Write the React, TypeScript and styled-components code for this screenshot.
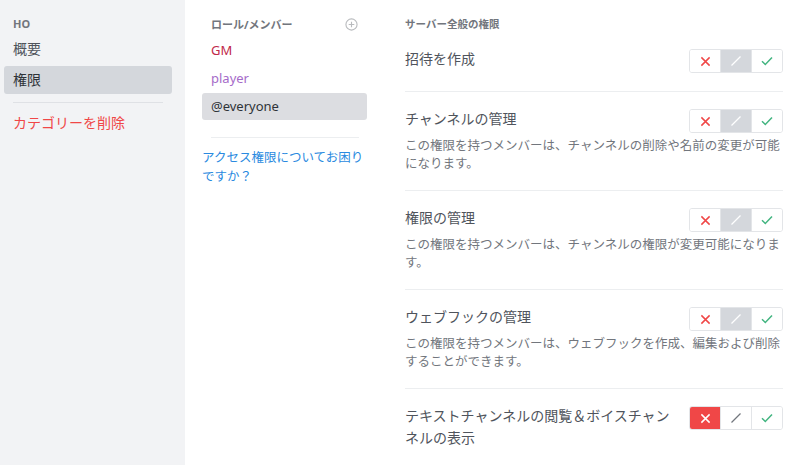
import styled, { createGlobalStyle } from "styled-components";

const GlobalStyle = createGlobalStyle`
  html, body {
    margin: 0;
    padding: 0;
    background: #ffffff;
  }
  body {
    font-family: "Noto Sans", "Noto Sans CJK JP", sans-serif;
  }
`;

type Perm = {
  title: string;
  desc?: string;
  state: "deny" | "neutral" | "allow";
};

const perms: Perm[] = [
  { title: "招待を作成", state: "neutral" },
  {
    title: "チャンネルの管理",
    desc: "この権限を持つメンバーは、チャンネルの削除や名前の変更が可能になります。",
    state: "neutral",
  },
  {
    title: "権限の管理",
    desc: "この権限を持つメンバーは、チャンネルの権限が変更可能になります。",
    state: "neutral",
  },
  {
    title: "ウェブフックの管理",
    desc: "この権限を持つメンバーは、ウェブフックを作成、編集および削除することができます。",
    state: "neutral",
  },
  { title: "テキストチャンネルの閲覧＆ボイスチャンネルの表示", state: "deny" },
];

const roles = [
  { name: "GM", color: "#c0284a" },
  { name: "player", color: "#a56bc9" },
  { name: "@everyone", color: "#2e3338", selected: true },
];

export default function App() {
  return (
    <Layout>
      <GlobalStyle />
      <Sidebar>
        <SideHeader>HO</SideHeader>
        <SideItem>概要</SideItem>
        <SideItem $selected>権限</SideItem>
        <SideDivider />
        <SideItem $danger>カテゴリーを削除</SideItem>
      </Sidebar>

      <Roles>
        <RolesHeader>
          <span>ロール/メンバー</span>
          <PlusIcon />
        </RolesHeader>
        <RoleList>
          {roles.map((r) => (
            <RoleItem key={r.name} $color={r.color} $selected={r.selected}>
              {r.name}
            </RoleItem>
          ))}
        </RoleList>
        <RoleDivider />
        <HelpLink>アクセス権限についてお困りですか？</HelpLink>
      </Roles>

      <Content>
        <SectionHeader>サーバー全般の権限</SectionHeader>
        {perms.map((p) => (
          <PermRow key={p.title} $hasDesc={!!p.desc}>
            <PermTop>
              <PermTitle>{p.title}</PermTitle>
              <Toggle state={p.state} />
            </PermTop>
            {p.desc && <PermDesc>{p.desc}</PermDesc>}
          </PermRow>
        ))}
      </Content>
    </Layout>
  );
}

function PlusIcon() {
  return (
    <svg width="13" height="13" viewBox="0 0 14 14">
      <circle cx="7" cy="7" r="6" fill="none" stroke="#b9bbbe" strokeWidth="1.2" />
      <path d="M7 4v6M4 7h6" stroke="#b9bbbe" strokeWidth="1.2" />
    </svg>
  );
}

function Toggle({ state }: { state: Perm["state"] }) {
  return (
    <ToggleGroup>
      <ToggleCell $bg={state === "deny" ? "#f04747" : "#ffffff"}>
        <svg width="11" height="11" viewBox="0 0 12 12">
          <path
            d="M1.5 1.5l9 9M10.5 1.5l-9 9"
            stroke={state === "deny" ? "#ffffff" : "#f04747"}
            strokeWidth="1.6"
          />
        </svg>
      </ToggleCell>
      <ToggleCell $bg={state === "neutral" ? "#d4d7dc" : "#ffffff"}>
        <svg width="12" height="12" viewBox="0 0 12 12">
          <path
            d="M1.5 10.5l9-9"
            stroke={state === "neutral" ? "#ffffff" : "#72767d"}
            strokeWidth="1.3"
          />
        </svg>
      </ToggleCell>
      <ToggleCell $bg={state === "allow" ? "#43b581" : "#ffffff"}>
        <svg width="12" height="10" viewBox="0 0 12 10">
          <path
            d="M1 5.2l3.3 3.3L11 1.5"
            fill="none"
            stroke={state === "allow" ? "#ffffff" : "#43b581"}
            strokeWidth="1.5"
          />
        </svg>
      </ToggleCell>
    </ToggleGroup>
  );
}

const Layout = styled.div`
  display: flex;
  width: 800px;
  height: 465px;
  overflow: hidden;
  background: #ffffff;
`;

const Sidebar = styled.nav`
  width: 185px;
  flex-shrink: 0;
  box-sizing: border-box;
  background: #f2f3f5;
  padding: 17px 13px 0 4px;
  display: flex;
  flex-direction: column;
`;

const SideHeader = styled.div`
  font-size: 11px;
  font-weight: 700;
  line-height: 14px;
  color: #72767d;
  padding-left: 9px;
  margin-bottom: 4px;
`;

const SideItem = styled.div<{ $selected?: boolean; $danger?: boolean }>`
  height: 28px;
  line-height: 28px;
  padding-left: 9px;
  margin-bottom: 3px;
  border-radius: 3px;
  font-size: 14px;
  color: ${(p) => (p.$danger ? "#f04747" : p.$selected ? "#2e3338" : "#4f545c")};
  background: ${(p) => (p.$selected ? "#d4d7dc" : "transparent")};
`;

const SideDivider = styled.div`
  height: 1px;
  background: #dfe1e5;
  margin: 5px 9px 6px 9px;
`;

const Roles = styled.div`
  width: 200px;
  flex-shrink: 0;
  box-sizing: border-box;
  padding: 16px 18px 0 17px;
  display: flex;
  flex-direction: column;
`;

const RolesHeader = styled.div`
  display: flex;
  align-items: center;
  justify-content: space-between;
  height: 16px;
  padding: 0 9px;
  font-size: 11px;
  font-weight: 700;
  color: #72767d;
  margin-bottom: 5px;
`;

const RoleList = styled.div`
  display: flex;
  flex-direction: column;
  gap: 1px;
`;

const RoleItem = styled.div<{ $color: string; $selected?: boolean }>`
  height: 27px;
  line-height: 27px;
  padding-left: 9px;
  border-radius: 3px;
  font-size: 13px;
  color: ${(p) => p.$color};
  background: ${(p) => (p.$selected ? "#dcdde1" : "transparent")};
`;

const RoleDivider = styled.div`
  height: 1px;
  background: #eceef0;
  margin: 17px 8px 10px 9px;
`;

const HelpLink = styled.a`
  font-size: 12.5px;
  line-height: 19px;
  color: #2a8ae0;
  cursor: pointer;
`;

const Content = styled.main`
  flex: 1;
  box-sizing: border-box;
  padding: 17px 17px 0 20px;
  display: flex;
  flex-direction: column;
`;

const SectionHeader = styled.div`
  font-size: 10.5px;
  font-weight: 700;
  line-height: 14px;
  color: #72767d;
  margin-bottom: 1px;
`;

const PermRow = styled.div<{ $hasDesc: boolean }>`
  padding: 17px 0 ${(p) => (p.$hasDesc ? "17px" : "18px")};
  border-bottom: 1px solid #eceef0;

  &:last-child {
    border-bottom: none;
  }
`;

const PermTop = styled.div`
  display: flex;
  align-items: flex-start;
  gap: 16px;
`;

const PermTitle = styled.div`
  flex: 1;
  font-size: 14px;
  line-height: 22px;
  margin-top: -1px;
  color: #4f545c;
`;

const PermDesc = styled.div`
  margin-top: 4px;
  font-size: 12.5px;
  line-height: 18px;
  color: #72767d;
`;

const ToggleGroup = styled.div`
  display: flex;
  flex-shrink: 0;
  height: 24px;
  border: 1px solid #e3e5e8;
  border-radius: 3px;
  overflow: hidden;
  box-sizing: border-box;
`;

const ToggleCell = styled.div<{ $bg: string }>`
  width: 30px;
  display: flex;
  align-items: center;
  justify-content: center;
  background: ${(p) => p.$bg};

  & + & {
    border-left: 1px solid #e3e5e8;
  }
`;
